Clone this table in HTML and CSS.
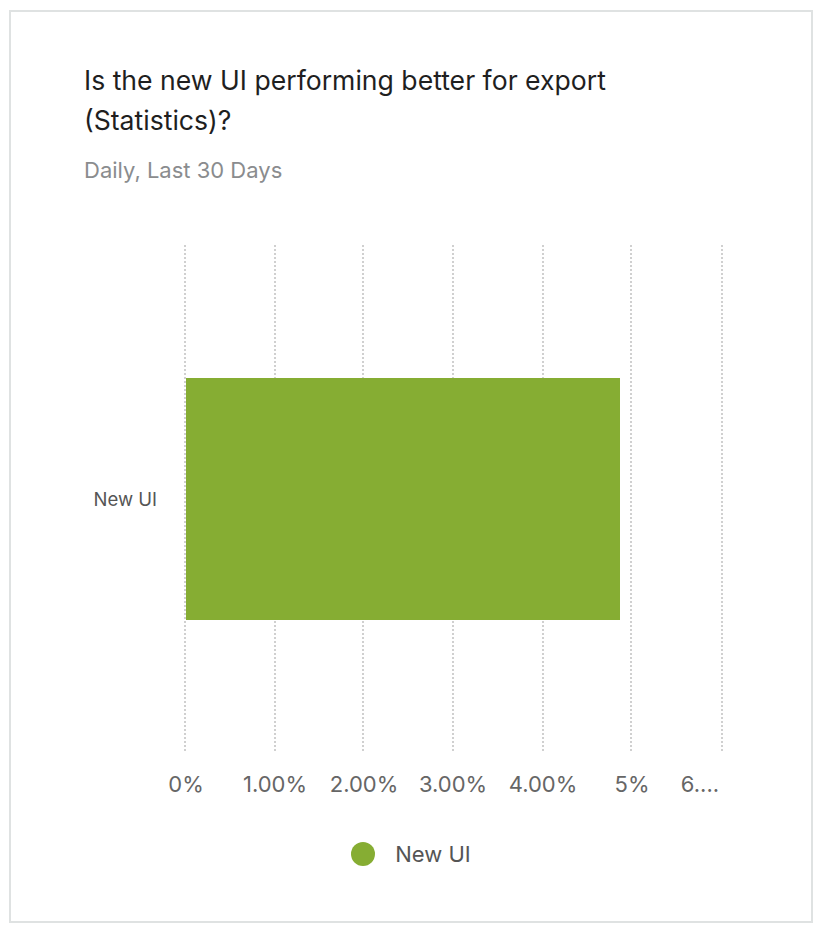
FILE: index.html
```html
<!DOCTYPE html>
<html lang="en">
<head>
<meta charset="utf-8">
<title>Is the new UI performing better for export (Statistics)?</title>
<link rel="stylesheet" href="styles.css">
</head>
<body>
<div class="card">
  <h1 class="title">Is the new UI performing better for export (Statistics)?</h1>
  <p class="subtitle">Daily, Last 30 Days</p>
  <div class="chart">
    <div class="row">
      <div class="ylabel">New UI</div>
      <div class="plot">
        <span class="grid" style="left:0px"></span>
        <span class="grid" style="left:90px"></span>
        <span class="grid" style="left:178px"></span>
        <span class="grid" style="left:268px"></span>
        <span class="grid" style="left:358px"></span>
        <span class="grid" style="left:446px"></span>
        <span class="grid" style="left:537px"></span>
        <div class="bar" style="width:434px"></div>
      </div>
    </div>
    <div class="xaxis">
      <span class="tick" style="left:1px">0%</span>
      <span class="tick" style="left:90px">1.00%</span>
      <span class="tick" style="left:179px">2.00%</span>
      <span class="tick" style="left:268px">3.00%</span>
      <span class="tick" style="left:358px">4.00%</span>
      <span class="tick" style="left:447px">5%</span>
      <span class="tick trunc" style="left:537px">6....</span>
    </div>
  </div>
  <div class="legend">
    <span class="swatch"></span>
    <span class="legend-text">New UI</span>
  </div>
</div>
</body>
</html>
```

FILE: styles.css
```css
html, body {
  margin: 0;
  padding: 0;
  background: #ffffff;
}

body {
  font-family: Inter, "Open Sans", "Liberation Sans", sans-serif;
}

.card {
  box-sizing: border-box;
  width: 804px;
  height: 913px;
  margin: 10px 0 0 9px;
  border: 2px solid #dfe2e2;
  padding: 48px 40px 0 73px;
  display: flex;
  flex-direction: column;
}

.title {
  margin: 0;
  font-size: 26.6px;
  font-weight: 400;
  line-height: 40px;
  color: #1f1f1f;
  max-width: 600px;
}

.subtitle {
  margin: 16px 0 0;
  font-size: 22px;
  line-height: 28px;
  color: #8a8c8e;
}

.chart {
  margin-top: 61px;
  margin-left: -73px;
}

.row {
  display: flex;
  align-items: stretch;
}

.ylabel {
  width: 146px;
  padding-right: 28px;
  box-sizing: content-box;
  display: flex;
  align-items: center;
  justify-content: flex-end;
  font-size: 18.5px;
  color: #555555;
}

.plot {
  position: relative;
  width: 538px;
  height: 507px;
}

.grid {
  position: absolute;
  top: 0;
  bottom: 0;
  width: 2px;
  margin-left: -1px;
  background-image: linear-gradient(to bottom, #d0d0d0 0 2px, transparent 2px 4px);
  background-size: 2px 4px;
}

.bar {
  position: absolute;
  left: 1px;
  top: 133px;
  height: 242px;
  background: #86ad33;
}

.xaxis {
  position: relative;
  margin-left: 174px;
  height: 62px;
}

.tick {
  position: absolute;
  top: 19px;
  transform: translateX(-50%);
  font-size: 22px;
  line-height: 26px;
  color: #666666;
  white-space: nowrap;
}

.tick.trunc {
  margin-left: -22px;
}

.legend {
  margin-top: 26px;
  display: flex;
  align-items: center;
  justify-content: center;
  gap: 20px;
  margin-left: -73px;
  margin-right: -40px;
}

.swatch {
  width: 24px;
  height: 24px;
  border-radius: 50%;
  background: #86ad33;
}

.legend-text {
  font-size: 22px;
  line-height: 28px;
  color: #555555;
}
```
